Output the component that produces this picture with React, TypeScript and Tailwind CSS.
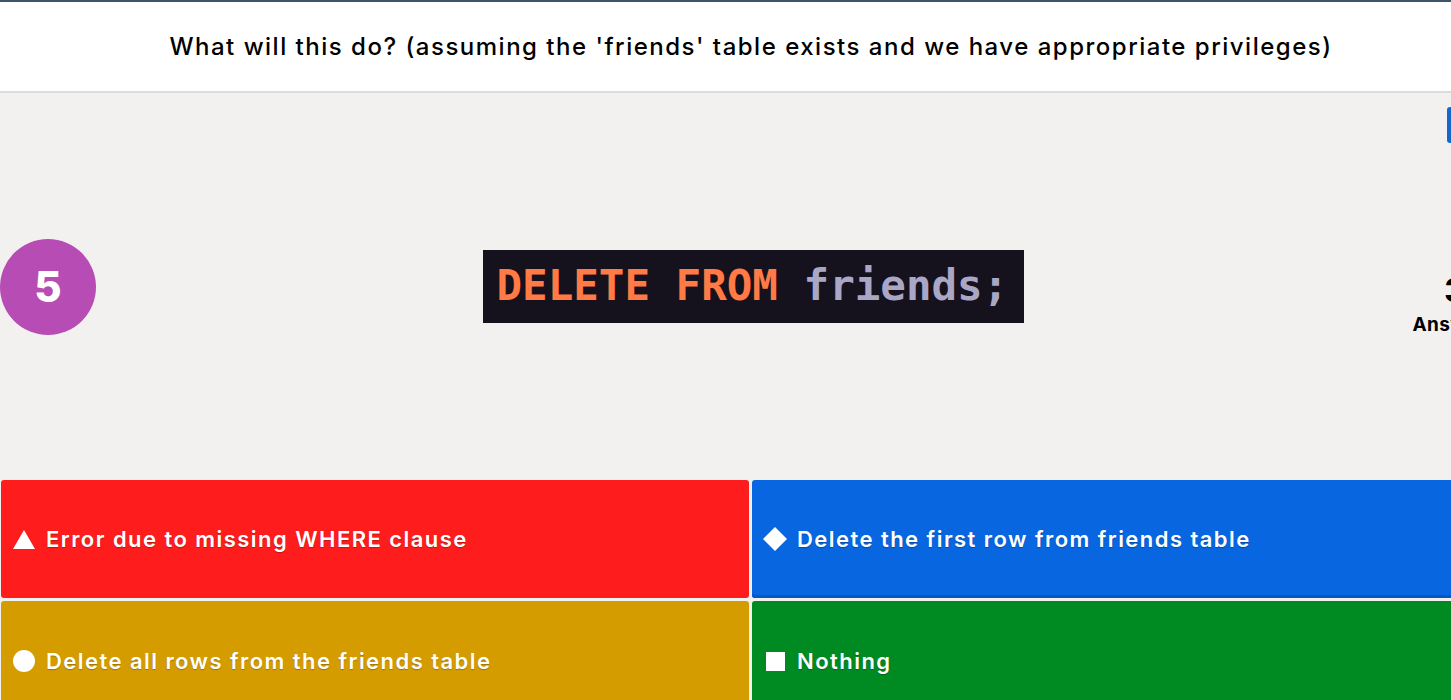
import React from "react";

const font = { fontFamily: "Inter, 'Noto Sans', sans-serif" };

function Tile({ color, icon, text }: { color: string; icon: React.ReactNode; text: string }) {
  return (
    <div className={`${color} rounded-[3px] flex items-center pl-[11px] gap-[10px] text-white`}>
      <div className="w-[24px] h-[24px] flex items-center justify-center">{icon}</div>
      <span className="text-[22px] font-semibold tracking-[1.45px] [text-shadow:0_1px_1px_rgba(0,0,0,0.25)]">{text}</span>
    </div>
  );
}

export default function App() {
  return (
    <div className="w-[1451px] h-[700px] overflow-hidden bg-[#f2f1f0]" style={font}>
      <div className="w-[1506px] flex flex-col">
        <div className="h-[2px] bg-[#3d5566]" />
        <div className="h-[91px] bg-white border-b-2 border-[#dcdcdc] flex items-center justify-center pr-[4px]">
          <h1 className="text-[24px] font-medium text-black tracking-[1.5px]">
            What will this do? (assuming the 'friends' table exists and we have appropriate privileges)
          </h1>
        </div>
        <div className="relative h-[387px] grid grid-cols-[1fr_auto_1fr] items-center">
          <div className="flex justify-start">
            <div className="w-[96px] h-[96px] rounded-full bg-[#b84cb5] flex items-center justify-center">
              <span className="text-white text-[42px] font-extrabold">5</span>
            </div>
          </div>
          <div className="w-[541px] h-[73px] bg-[#15121d] flex items-center pl-[14px]">
            <span className="text-[42.5px] leading-none font-bold" style={{ fontFamily: "'DejaVu Sans Mono', monospace" }}>
              <span className="text-[#ff7a45]">DELETE FROM</span>
              <span className="text-[#aaa7c6]"> friends;</span>
            </span>
          </div>
          <div className="flex justify-end pr-[1px]">
            <div className="w-[100px] flex flex-col items-center mt-[34px]">
              <span className="text-[33px] font-extrabold text-black leading-none mb-[8px]">3</span>
              <span className="text-[19px] font-bold text-black leading-none tracking-[0.4px]">Answers</span>
            </div>
          </div>
          <div className="absolute top-[14px] right-[3px] w-[56px] h-[36px] rounded-[3px] bg-[#1368ce]" />
        </div>
        <div className="grid grid-cols-[748px_748px] grid-rows-[118px_120px] gap-x-[3px] gap-y-[3px] px-[1px]">
          <Tile
            color="bg-[#ff1c1c]"
            text="Error due to missing WHERE clause"
            icon={<svg width="22" height="19" viewBox="0 0 22 19"><polygon points="11,0 22,19 0,19" fill="white" /></svg>}
          />
          <Tile
            color="bg-[#0766e0] shadow-[inset_0_-3px_0_#0558c4]"
            text="Delete the first row from friends table"
            icon={<svg width="24" height="24" viewBox="0 0 24 24"><polygon points="12,0 24,12 12,24 0,12" fill="white" /></svg>}
          />
          <Tile
            color="bg-[#d59c00]"
            text="Delete all rows from the friends table"
            icon={<div className="w-[22px] h-[22px] rounded-full bg-white" />}
          />
          <Tile
            color="bg-[#008a22]"
            text="Nothing"
            icon={<div className="w-[19px] h-[19px] bg-white" />}
          />
        </div>
      </div>
    </div>
  );
}
